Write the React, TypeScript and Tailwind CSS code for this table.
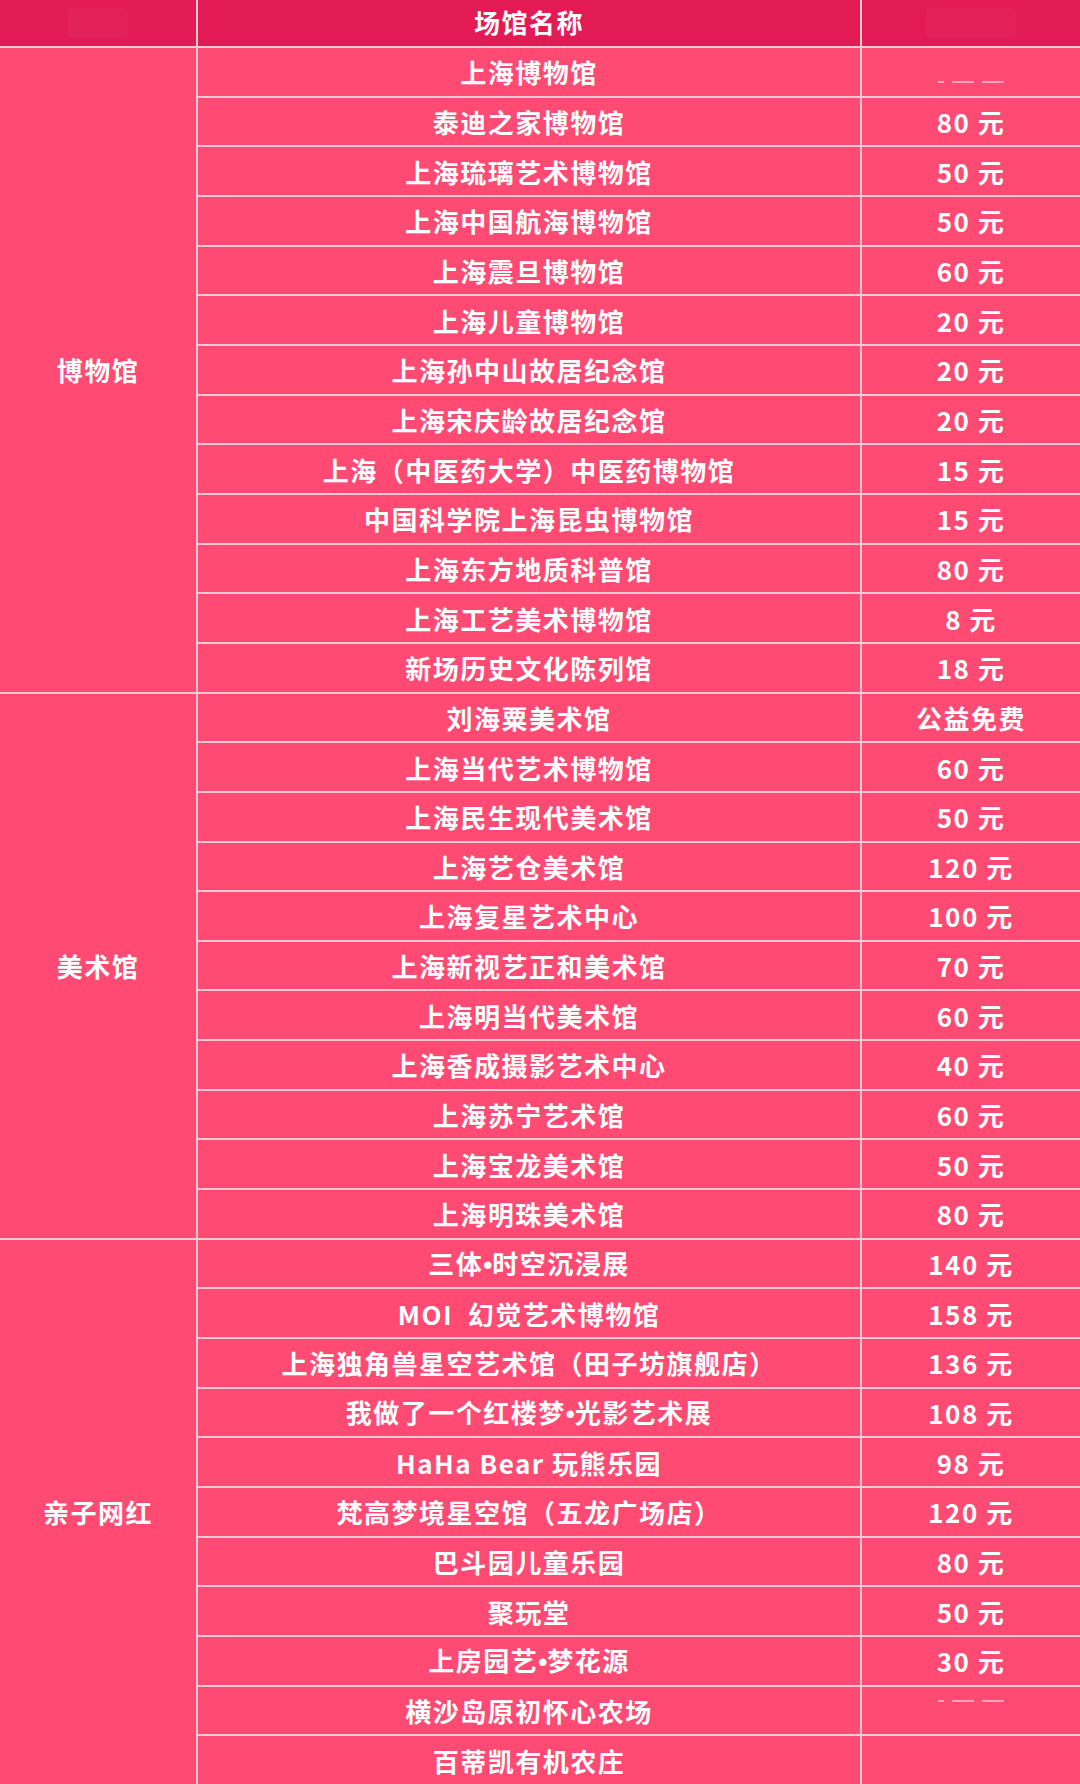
const museums: [string, string][] = [
  ['上海博物馆', 'blur-low'],
  ['泰迪之家博物馆', '80 元'],
  ['上海琉璃艺术博物馆', '50 元'],
  ['上海中国航海博物馆', '50 元'],
  ['上海震旦博物馆', '60 元'],
  ['上海儿童博物馆', '20 元'],
  ['上海孙中山故居纪念馆', '20 元'],
  ['上海宋庆龄故居纪念馆', '20 元'],
  ['上海（中医药大学）中医药博物馆', '15 元'],
  ['中国科学院上海昆虫博物馆', '15 元'],
  ['上海东方地质科普馆', '80 元'],
  ['上海工艺美术博物馆', '8 元'],
  ['新场历史文化陈列馆', '18 元'],
]

const galleries: [string, string][] = [
  ['刘海粟美术馆', '公益免费'],
  ['上海当代艺术博物馆', '60 元'],
  ['上海民生现代美术馆', '50 元'],
  ['上海艺仓美术馆', '120 元'],
  ['上海复星艺术中心', '100 元'],
  ['上海新视艺正和美术馆', '70 元'],
  ['上海明当代美术馆', '60 元'],
  ['上海香成摄影艺术中心', '40 元'],
  ['上海苏宁艺术馆', '60 元'],
  ['上海宝龙美术馆', '50 元'],
  ['上海明珠美术馆', '80 元'],
]

const family: [string, string][] = [
  ['三体•时空沉浸展', '140 元'],
  ['MOI  幻觉艺术博物馆', '158 元'],
  ['上海独角兽星空艺术馆（田子坊旗舰店）', '136 元'],
  ['我做了一个红楼梦•光影艺术展', '108 元'],
  ['HaHa Bear 玩熊乐园', '98 元'],
  ['梵高梦境星空馆（五龙广场店）', '120 元'],
  ['巴斗园儿童乐园', '80 元'],
  ['聚玩堂', '50 元'],
  ['上房园艺•梦花源', '30 元'],
  ['横沙岛原初怀心农场', 'blur-high'],
  ['百蒂凯有机农庄', 'blur-none'],
]

const groups = [
  { label: '博物馆', rows: museums, span: 'row-span-13' },
  { label: '美术馆', rows: galleries, span: 'row-span-11' },
  { label: '亲子网红', rows: family, span: 'row-span-11' },
]

const cell = 'flex items-center justify-center text-white font-bold text-[26px] tracking-[1.5px] whitespace-pre'

export default function App() {
  return (
    <div
      className="w-[1080px] h-[1784px] grid grid-cols-[196px_662px_1fr] grid-rows-[46px_repeat(35,minmax(0,1fr))] gap-[2px] bg-[#f6c9d4] overflow-hidden"
      style={{ fontFamily: '"Noto Sans CJK SC", "Noto Sans", sans-serif' }}
    >
      {/* Header */}
      <div className="bg-[#e31b55] flex items-center justify-center">
        <div className="w-[60px] h-[30px] bg-white/[0.03] rounded" />
      </div>
      <div className={`${cell} bg-[#e31b55] pb-1`}>场馆名称</div>
      <div className="bg-[#e31b55] flex items-center justify-center">
        <div className="w-[90px] h-[30px] bg-white/[0.03] rounded" />
      </div>

      {groups.map((g, gi) => (
        <GroupRows key={gi} label={g.label} rows={g.rows} span={g.span} />
      ))}
    </div>
  )
}

function GroupRows({ label, rows, span }: { label: string; rows: [string, string][]; span: string }) {
  return (
    <>
      <div className={`${cell} ${span} col-start-1 bg-[#ff4b73]`}>{label}</div>
      {rows.map(([name, price], i) => (
        <Row key={i} name={name} price={price} />
      ))}
    </>
  )
}

// the bullet sits tight between words, so give it a latin font
function Name({ text }: { text: string }) {
  const parts = text.split('•')
  return (
    <span>
      {parts.map((p, i) => (
        <span key={i}>
          {i > 0 && <span className="font-['Liberation_Sans'] tracking-normal">•</span>}
          {p}
        </span>
      ))}
    </span>
  )
}

function Blurred({ pos }: { pos: string }) {
  if (pos === 'blur-none') return null
  return (
    <div className={`flex items-center gap-2 opacity-50 ${pos === 'blur-low' ? 'pt-5' : 'pb-5'}`}>
      <span className="w-[6px] h-[2px] bg-white" />
      <span className="w-[22px] h-[2px] bg-white" />
      <span className="w-[22px] h-[2px] bg-white" />
    </div>
  )
}

function Row({ name, price }: { name: string; price: string }) {
  return (
    <>
      <div className={`${cell} col-start-2 bg-[#ff4b73]`}>
        <Name text={name} />
      </div>
      <div className={`${cell} col-start-3 bg-[#ff4b73]`}>
        {price.startsWith('blur') ? <Blurred pos={price} /> : price}
      </div>
    </>
  )
}
